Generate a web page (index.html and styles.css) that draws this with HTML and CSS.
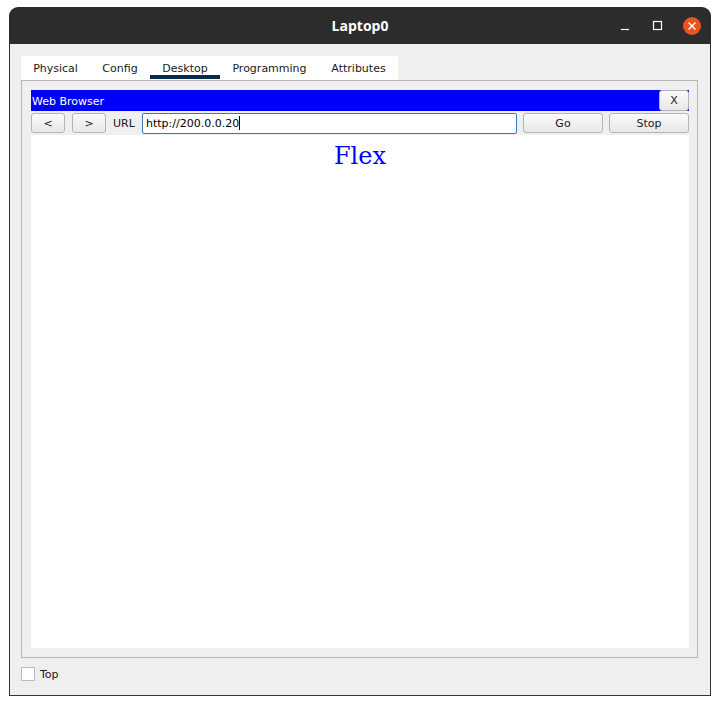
FILE: index.html
```html
<!DOCTYPE html>
<html>
<head>
<meta charset="utf-8">
<link rel="stylesheet" href="styles.css">
</head>
<body>
<div class="window">
  <div class="titlebar">
    <div class="title">Laptop0</div>
    <div class="controls">
      <svg class="ctl" width="14" height="14" viewBox="0 0 14 14"><line x1="2" y1="10.5" x2="10" y2="10.5" stroke="#fff" stroke-width="1.2"/></svg>
      <svg class="ctl" width="14" height="14" viewBox="0 0 14 14"><rect x="2.5" y="2.5" width="8" height="8" fill="none" stroke="#fff" stroke-width="1.2"/></svg>
      <svg class="ctl close" width="18" height="18" viewBox="0 0 18 18"><circle cx="9" cy="9" r="9" fill="#e95420"/><path d="M5.5 5.5 L12.5 12.5 M12.5 5.5 L5.5 12.5" stroke="#fff" stroke-width="1.4"/></svg>
    </div>
  </div>
  <div class="body">
    <div class="tabs">
      <div class="tab t1">Physical</div>
      <div class="tab t2">Config</div>
      <div class="tab t3 active">Desktop</div>
      <div class="tab t4">Programming</div>
      <div class="tab t5">Attributes</div>
    </div>
    <div class="panel">
      <div class="browser">
        <div class="bluebar">
          <span class="bartitle">Web Browser</span>
          <div class="btn xbtn">X</div>
        </div>
        <div class="toolbar">
          <div class="btn nav">&lt;</div>
          <div class="btn nav">&gt;</div>
          <div class="urllabel">URL</div>
          <div class="urlinput">http://200.0.0.20<span class="caret"></span></div>
          <div class="btn wide">Go</div>
          <div class="btn wide">Stop</div>
        </div>
        <div class="page">
          <div class="flex">Flex</div>
        </div>
      </div>
    </div>
    <div class="footer">
      <div class="checkbox"></div>
      <span class="toplabel">Top</span>
    </div>
  </div>
</div>
</body>
</html>
```

FILE: styles.css
```css
html, body {
  margin: 0;
  padding: 0;
  background: #ffffff;
}
body {
  font-family: "DejaVu Sans", sans-serif;
  font-size: 11px;
  color: #1a1a1a;
}
.window {
  margin: 7px 0 0 9px;
  width: 702px;
}
.titlebar {
  height: 37px;
  background: #2c2c2c;
  border-radius: 9px 9px 0 0;
  position: relative;
  display: flex;
  align-items: center;
  justify-content: center;
}
.title {
  color: #ffffff;
  font-family: "Open Sans", "DejaVu Sans", sans-serif;
  font-weight: 700;
  font-size: 14px;
}
.controls {
  position: absolute;
  right: 10px;
  top: 10px;
  display: flex;
  align-items: center;
  gap: 18px;
}
.ctl { display: block; }
.body {
  background: #efefef;
  border: 1px solid #333333;
  border-top: none;
  height: 652px;
  box-sizing: border-box;
  padding: 12px 12px 0 11px;
}
.tabs {
  display: flex;
  background: #ffffff;
  width: 377px;
  height: 24px;
}
.tab {
  box-sizing: border-box;
  padding-top: 1px;
  line-height: 23px;
  text-align: center;
  position: relative;
  color: #1a1a1a;
}
.t1 { width: 69px; }
.t2 { width: 60px; }
.t3 { width: 70px; }
.t4 { width: 99px; }
.t5 { width: 79px; }
.tab.active::after {
  content: "";
  position: absolute;
  left: 0;
  right: 0;
  bottom: 1px;
  height: 4px;
  background: #0e2a4a;
}
.panel {
  border: 1px solid #b6b6b6;
  height: 578px;
  box-sizing: border-box;
  padding: 9px 8px 9px 9px;
}
.browser {
  display: flex;
  flex-direction: column;
  height: 100%;
}
.bluebar {
  background: #0000ff;
  height: 21px;
  display: flex;
  align-items: center;
  justify-content: space-between;
}
.bartitle {
  color: #ffffff;
  padding-left: 1px;
  padding-top: 2px;
}
.btn {
  box-sizing: border-box;
  border: 1px solid #b4b4b4;
  border-radius: 3px;
  background: linear-gradient(#fafafa, #e8e8e8);
  display: flex;
  align-items: center;
  justify-content: center;
  color: #1a1a1a;
  height: 20px;
}
.xbtn {
  width: 30px;
  height: 21px;
}
.toolbar {
  display: flex;
  align-items: center;
  height: 24px;
  gap: 7px;
}
.nav { width: 34px; }
.urllabel {
  width: 22px;
  text-align: left;
}
.urlinput {
  box-sizing: border-box;
  width: 375px;
  height: 21px;
  border: 1px solid #3d7ab8;
  border-radius: 2px;
  background: #ffffff;
  padding-left: 3px;
  display: flex;
  align-items: center;
  color: #000;
}
.caret {
  display: inline-block;
  width: 1px;
  height: 14px;
  background: #000;
}
.wide { width: 80px; margin-left: -1px; }
.page {
  flex: 1;
  background: #ffffff;
}
.flex {
  text-align: center;
  font-family: "DejaVu Serif", serif;
  font-size: 24px;
  color: #0000ff;
  line-height: 28px;
  margin-top: 7px;
}
.footer {
  display: flex;
  align-items: center;
  gap: 5px;
  margin-top: 8px;
  height: 16px;
}
.checkbox {
  width: 14px;
  height: 14px;
  box-sizing: border-box;
  border: 1px solid #bcbcbc;
  background: #ffffff;
}
.toplabel {
  color: #1a1a1a;
}
```
